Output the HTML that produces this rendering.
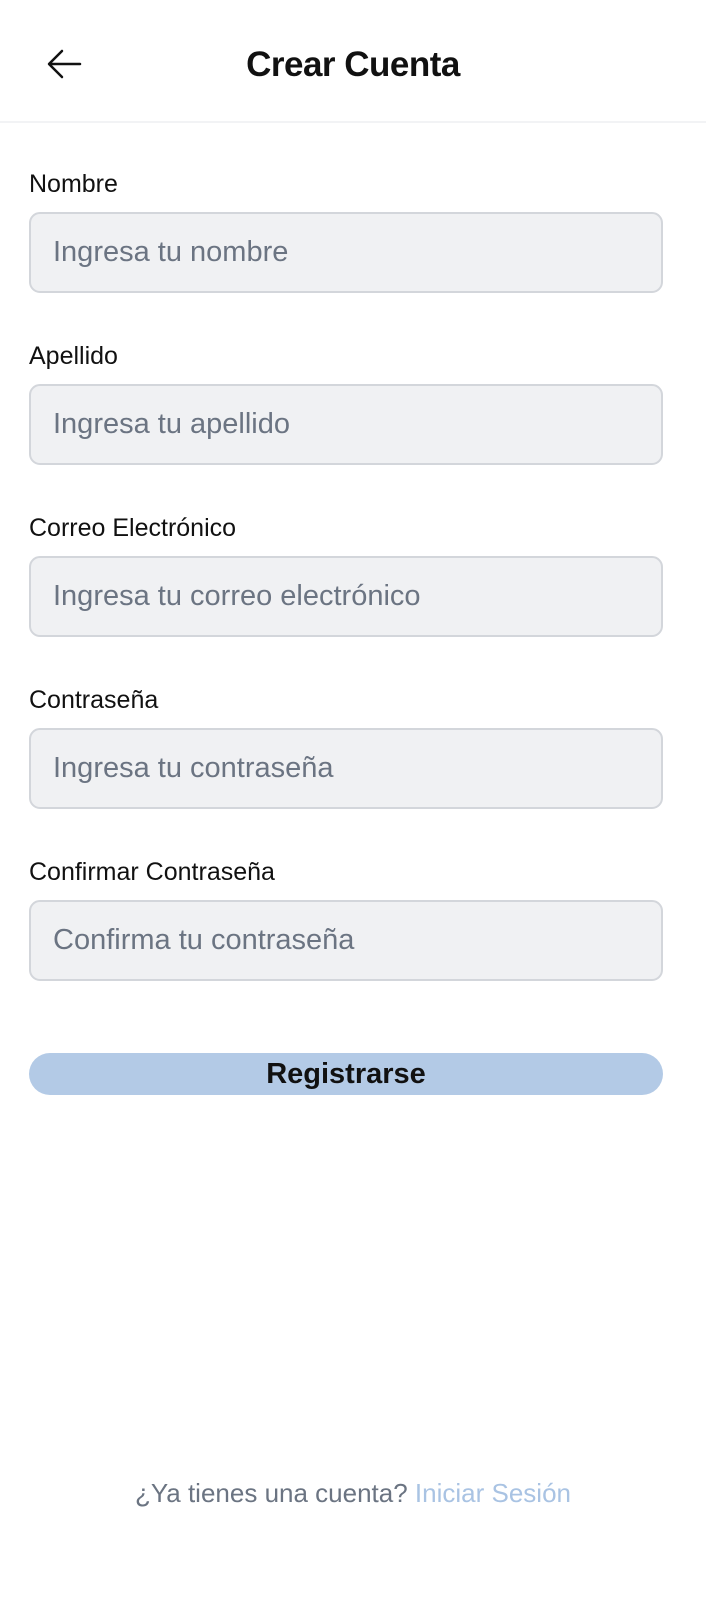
<!DOCTYPE html>
<html><head><meta charset="utf-8"><style>
*{margin:0;padding:0;box-sizing:border-box}
body{width:706px;height:1600px;background:#fff;font-family:"Liberation Sans",sans-serif;position:relative;overflow:hidden}
.hdr{position:absolute;left:0;top:0;width:706px;height:123px;border-bottom:2px solid #f2f3f5}
.title{position:absolute;left:0;width:706px;top:45px;text-align:center;font-size:35px;font-weight:bold;color:#111;letter-spacing:-0.5px}
.back{position:absolute;left:46px;top:48px}
.lbl{position:absolute;left:29px;font-size:25px;color:#111}
.inp{position:absolute;left:29px;width:634px;height:81px;background:#f0f1f3;border:2px solid #d3d6db;border-radius:11px;padding-left:22px;line-height:77px;font-size:29px;color:#6b7482}
.btn{position:absolute;left:29px;top:1053px;width:634px;height:42px;background:#b3cae6;border-radius:21px;text-align:center;line-height:42px;font-size:29px;font-weight:bold;color:#111}
.foot{position:absolute;left:0;width:706px;top:1478px;text-align:center;font-size:26px;color:#6b7482}
.foot span{color:#a9c3e3}
</style></head><body>
<div class="hdr">
<svg class="back" width="36" height="32" viewBox="0 0 36 32"><path d="M34 16H4M16 3L3 16l13 13" fill="none" stroke="#111" stroke-width="2.5" stroke-linecap="round" stroke-linejoin="round"/></svg>
<div class="title">Crear Cuenta</div>
</div>
<div class="lbl" style="top:170px">Nombre</div>
<div class="inp" style="top:212px">Ingresa tu nombre</div>
<div class="lbl" style="top:342px">Apellido</div>
<div class="inp" style="top:384px">Ingresa tu apellido</div>
<div class="lbl" style="top:514px">Correo Electrónico</div>
<div class="inp" style="top:556px">Ingresa tu correo electrónico</div>
<div class="lbl" style="top:686px">Contraseña</div>
<div class="inp" style="top:728px">Ingresa tu contraseña</div>
<div class="lbl" style="top:858px">Confirmar Contraseña</div>
<div class="inp" style="top:900px">Confirma tu contraseña</div>
<div class="btn">Registrarse</div>
<div class="foot">¿Ya tienes una cuenta? <span>Iniciar Sesión</span></div>
</body></html>
